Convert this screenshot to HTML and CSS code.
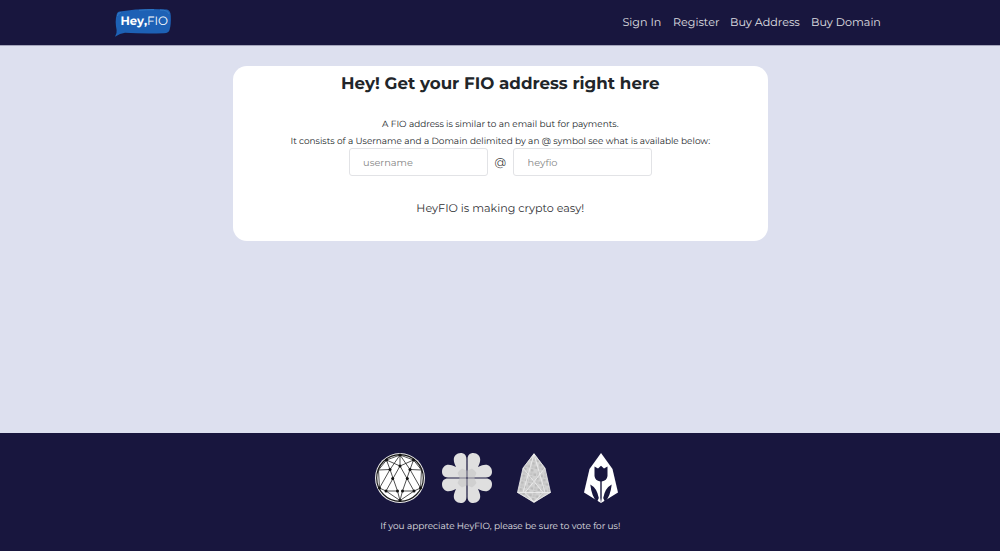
FILE: index.html
```html
<!DOCTYPE html>
<html lang="en">
<head>
<meta charset="utf-8">
<title>HeyFIO</title>
<link rel="stylesheet" href="styles.css">
</head>
<body>
<header class="header">
  <svg class="logo" viewBox="0 0 58 30" role="img" aria-label="Hey.FIO">
    <path d="M6 3.6Q28 0 53 1.6Q56.5 2.2 56.8 8Q57.2 17 55.5 22Q55 25 50 25.3Q29 26 11 24.8Q6 25.5 1 28.8Q3.2 25 2.6 22Q.8 13 2.6 7Q3 4 6 3.6Z" fill="#1d61b5"/>
    <path d="M3.4 8Q3.6 5 7 4.4M25 2.3Q32 1.6 40 1.7M46 2Q54 2 55 6" fill="none" stroke="#357fca" stroke-width=".8"/>
    <text class="logo-bold" x="6.5" y="17.3" textLength="23.5" lengthAdjust="spacingAndGlyphs">Hey</text>
    <text class="logo-bold" x="30" y="17.3">,</text>
    <text class="logo-light" x="33" y="17.3" textLength="21" lengthAdjust="spacingAndGlyphs">FIO</text>
  </svg>
  <nav class="nav"><a class="nav-signin">Sign In</a><a class="nav-register">Register</a><a class="nav-address">Buy Address</a><a class="nav-domain">Buy Domain</a></nav>
</header>
<main class="main">
  <section class="card">
    <h1 class="title">Hey! Get your FIO address right here</h1>
    <p class="copy copy-first">A FIO address is similar to an email but for payments.</p>
    <p class="copy">It consists of a Username and a Domain delimited by an @ symbol see what is available below:</p>
    <form class="fields">
      <input class="field" placeholder="username" aria-label="Username">
      <span class="at">@</span>
      <input class="field" placeholder="heyfio" aria-label="Domain">
    </form>
    <p class="tagline">HeyFIO is making crypto easy!</p>
  </section>
</main>
<footer class="footer">
  <div class="icons">
    <svg class="icon" viewBox="0 0 50 50">
      <circle cx="25" cy="25" r="25" fill="#eee"/>
      <circle cx="25" cy="25" r="23.3" fill="#fff" stroke="#1a1a1a" stroke-width="1.2"/>
      <g fill="none" stroke="#222" stroke-width=".8">
        <path d="M25 2L11.5 7L3.5 17L4.5 35L11 38M25 2L38.5 7L46.5 17L45.5 35L39 38M11.5 7L25 13L38.5 7M25 2V13M11.5 7L15 16.5L3.5 17M38.5 7L35 16.5L46.5 17M25 13L11 38L25 47.5L39 38ZM15 16.5L22.5 38H11M35 16.5L27.5 38H39M22.5 38L25 47.5L27.5 38M15 16.5L4.5 35M35 16.5L45.5 35M15 16.5L25 2L35 16.5"/>
      </g>
      <g fill="#111"><circle cx="25" cy="2" r="1.5"/><circle cx="11.5" cy="7" r="1.5"/><circle cx="38.5" cy="7" r="1.5"/><circle cx="25" cy="13" r="1.5"/><circle cx="15" cy="16.5" r="1.5"/><circle cx="35" cy="16.5" r="1.5"/><circle cx="17.7" cy="25.5" r="1.5"/><circle cx="32.3" cy="25.5" r="1.5"/><circle cx="4.5" cy="35" r="1.5"/><circle cx="45.5" cy="35" r="1.5"/><circle cx="11" cy="38" r="1.5"/><circle cx="22.5" cy="38" r="1.5"/><circle cx="27.5" cy="38" r="1.5"/><circle cx="39" cy="38" r="1.5"/><circle cx="25" cy="47.5" r="1.5"/></g>
    </svg>
    <svg class="icon" viewBox="0 0 50 50">
      <defs><g id="leaf">
        <path d="M24.4 24.4V6C24.4 2 22 0 18.8 0C14.5 0 11.8 3 11.8 6.5C11.8 9 12.5 10.5 14 14C10.5 12.5 9 11.8 6.5 11.8C3 11.8 0 14.5 0 18.8C0 22 2 24.4 6 24.4Z"/>
        <path class="leaf-core" d="M24.4 24.4V17.5L20 15.5L17.5 17.5L15.5 20L17.5 24.4Z"/>
      </g></defs>
      <g fill="#dfdfdf"><use href="#leaf"/><use href="#leaf" transform="matrix(-1 0 0 1 50 0)"/><use href="#leaf" transform="matrix(1 0 0 -1 0 50)"/><use href="#leaf" transform="rotate(180 25 25)"/></g>
    </svg>
    <svg class="icon" viewBox="0 0 50 50">
      <defs><pattern id="mosaic" width="7" height="7" patternUnits="userSpaceOnUse" patternTransform="rotate(12)"><rect width="7" height="7" fill="#d2d2d2"/><path d="M.4.4H3V3H.4ZM4 4H6.5V6.5H4Z" fill="#bababa"/><path d="M4 .5H6.5V3H4Z" fill="#c5c5c5"/></pattern></defs>
      <path d="M25 0L36 15L41.5 39.5L25 50L8.5 39.5L14 15Z" fill="url(#mosaic)"/>
      <path d="M25 1L14 15L8.5 39.5H41.5L36 15ZM25 1L14 39.5M25 1L36 39.5M14 15L34 39.5L25 49L16 39.5L36 15M8.5 39.5L25 49L41.5 39.5" fill="none" stroke="#f0f0f0" stroke-width=".8"/>
    </svg>
    <svg class="icon" viewBox="0 0 50 50">
      <path d="M25 0L36.5 16L42 39.5L25 50L8 39.5L13.5 16Z" fill="#fff"/>
      <g fill="#18163e">
        <path d="M18.5 13.5L22 15.5L25 12.8L28 15.5L31.5 13.5V23Q31 27.5 25.7 28.5V45L25 50L24.3 45V28.5Q19 27.5 18.5 23Z"/>
        <path d="M14.3 31.5Q21 35 22.8 45L21 49Q15.5 43 14.3 31.5ZM35.7 31.5Q29 35 27.2 45L29 49Q34.5 43 35.7 31.5Z"/>
      </g>
    </svg>
  </div>
  <p class="vote">If you appreciate HeyFIO, please be sure to vote for us!</p>
</footer>
</body>
</html>
```
FILE: styles.css
```css
* { box-sizing: border-box; }
body {
  margin: 0;
  height: 551px;
  display: flex;
  flex-direction: column;
  overflow: hidden;
  background: #dde0ef;
  color: #212529;
  font-family: Montserrat, Inter, sans-serif;
  text-rendering: geometricPrecision;
}
h1, p { margin: 0; white-space: nowrap; }
.header {
  height: 45px;
  padding: 0 119px 0 114px;
  display: flex;
  align-items: center;
  justify-content: space-between;
  background: #18163e;
  box-shadow: 0 1px 0 #a4a5bb;
}
.logo { width: 58px; height: 30px; }
.logo-bold { fill: #fff; font: 700 12px Montserrat, sans-serif; }
.logo-light { fill: #fff; font: 400 12px Montserrat, sans-serif; }
.nav { display: flex; gap: 11.5px; color: #e0e0e5; font-size: 11.15px; line-height: 16px; white-space: nowrap; padding-bottom: 1px; }
.nav-signin { width: 39px; }
.nav-register { width: 45.5px; }
.nav-address { width: 69.5px; }
.nav-domain { width: 70px; }
.main { flex: 1; padding: 21.4px 0 0 0.6px; }
.card {
  width: 535.5px;
  height: 175px;
  margin: 0 auto;
  display: flex;
  flex-direction: column;
  align-items: center;
  border-radius: 14px;
  background: #fff;
}
.title { margin-top: 7px; font-size: 16.7px; line-height: 22px; font-weight: 700; }
.copy { font-size: 8.92px; line-height: 17px; }
.copy-first { margin-top: 21px; }
.fields { display: flex; align-items: center; margin-top: -2px; }
.field {
  width: 139px;
  height: 28px;
  padding: 0 13.5px;
  border: 1px solid #e2e3e6;
  border-radius: 3px;
  background: #fff;
  font: 9.8px Montserrat, Inter, sans-serif;
}
.field::placeholder { color: #858585; opacity: 1; }
.at { width: 25.5px; text-align: center; font-size: 11.2px; color: #333; }
.tagline { margin-top: 24px; font-size: 11.15px; line-height: 17px; color: #303034; }
.footer {
  height: 118px;
  padding: 19.5px 0 0 0.5px;
  display: flex;
  flex-direction: column;
  align-items: center;
  background: #18163e;
}
.icons { display: flex; gap: 17px; }
.icon { width: 50px; height: 50px; }
.leaf-core { fill: #d0d0d0; }
.vote { margin-top: 16.4px; font-size: 8.92px; line-height: 16px; color: #e0e0e5; }
```
